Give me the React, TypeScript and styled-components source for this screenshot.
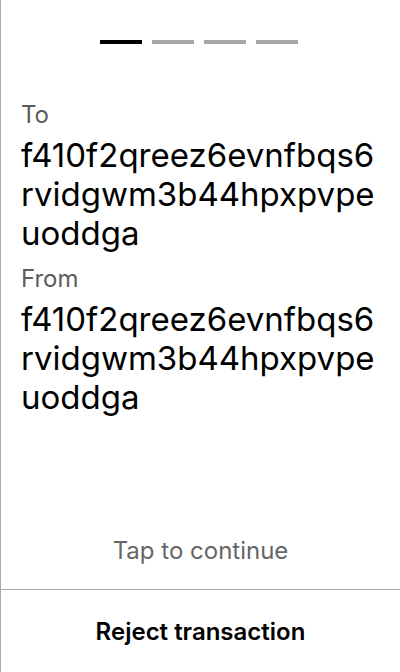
import React from "react";
import styled, { createGlobalStyle } from "styled-components";

const Global = createGlobalStyle`
  html, body { margin: 0; padding: 0; background: #fff; }
  body { font-family: Inter, "Noto Sans", sans-serif; }
`;

const Screen = styled.div`
  box-sizing: border-box;
  width: 400px;
  height: 672px;
  border-left: 1px solid #a9a9a9;
  display: flex;
  flex-direction: column;
  background: #fff;
`;

const Steps = styled.div`
  display: flex;
  justify-content: center;
  gap: 10px;
  padding-top: 40px;
  padding-right: 3px;
`;

const Step = styled.div<{ $active?: boolean }>`
  width: 42px;
  height: 4px;
  background: ${(p) => (p.$active ? "#000" : "#a8a8a8")};
`;

const Body = styled.div`
  flex: 1;
  display: flex;
  flex-direction: column;
  padding: 0 20px;
  margin-top: 56px;
`;

const Label = styled.div`
  font-size: 24px;
  line-height: 30px;
  color: #5c5c5c;
  margin-bottom: 6px;
`;

const Address = styled.div`
  font-size: 33px;
  line-height: 39px;
  color: #000;
  word-break: break-all;
  margin-bottom: 11px;
`;

const Hint = styled.div`
  text-align: center;
  font-size: 24px;
  line-height: 30px;
  color: #666;
  padding-bottom: 23px;
`;

const Footer = styled.button`
  all: unset;
  box-sizing: border-box;
  height: 83px;
  border-top: 1px solid #a9a9a9;
  display: flex;
  align-items: center;
  justify-content: center;
  font-family: Inter, "Noto Sans", sans-serif;
  font-size: 24px;
  font-weight: 600;
  color: #000;
`;

const Spacer = styled.div`
  flex: 1;
`;

const addr = "f410f2qreez6evnfbqs6rvidgwm3b44hpxpvpeuoddga";

export default function App() {
  return (
    <>
      <Global />
      <Screen>
        <Steps>
          <Step $active />
          <Step />
          <Step />
          <Step />
        </Steps>
        <Body>
          <Label>To</Label>
          <Address>{addr}</Address>
          <Label>From</Label>
          <Address>{addr}</Address>
          <Spacer />
          <Hint>Tap to continue</Hint>
        </Body>
        <Footer>Reject transaction</Footer>
      </Screen>
    </>
  );
}
